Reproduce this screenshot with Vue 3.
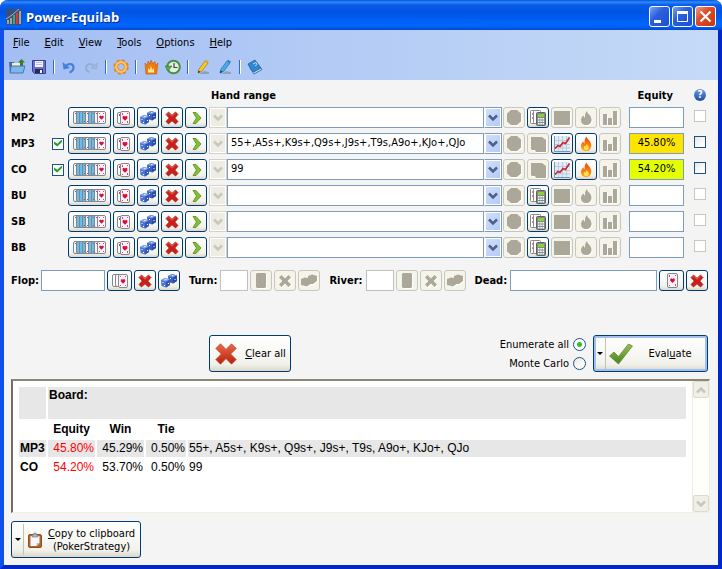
<template>
  <div class="window">
    <!-- Icon shapes, shared by all the buttons -->
    <svg class="sprite" aria-hidden="true">
      <defs>
        <linearGradient id="gRed" x1="0" y1="0" x2="0" y2="1">
          <stop offset="0" stop-color="#e8694f" /><stop offset="1" stop-color="#bd1f06" />
        </linearGradient>
        <linearGradient id="gGreen" x1="0" y1="0" x2="0" y2="1">
          <stop offset="0" stop-color="#9ac256" /><stop offset="1" stop-color="#4c8020" />
        </linearGradient>
        <linearGradient id="gFire" x1="0" y1="0" x2="0" y2="1">
          <stop offset="0" stop-color="#f0460a" /><stop offset="1" stop-color="#ffa616" />
        </linearGradient>
      </defs>
      <symbol id="heartCard" viewBox="0 0 9 13">
        <rect x=".5" y=".5" width="8" height="12" rx="1.5" fill="#fbf6fb" stroke="#85858f" />
        <path d="M4.5 8.8 2.3 6.6V5.2l1-.7 1.2.8 1.2-.8 1 .7v1.4z" fill="#d6103c" />
        <path d="M2 2h1v1H2zM6 2h1v1H6zM2 10h1v1H2zM6 10h1v1H6z" fill="#e04468" />
      </symbol>
      <symbol id="range" viewBox="0 0 33 13">
        <g stroke="#7b8792">
          <rect x=".5" y=".5" width="6" height="12" rx="1.5" fill="#f6f6f6" />
          <rect x="3.5" y=".5" width="6" height="12" rx="1.5" fill="#6cbce8" />
          <rect x="6.5" y=".5" width="6" height="12" rx="1.5" fill="#6cbce8" />
          <rect x="9.5" y=".5" width="6" height="12" rx="1.5" fill="#6cbce8" />
          <rect x="12.5" y=".5" width="6" height="12" rx="1.5" fill="#eef2f4" />
          <rect x="15.5" y=".5" width="6" height="12" rx="1.5" fill="#6cbce8" />
          <rect x="18.5" y=".5" width="6" height="12" rx="1.5" fill="#6cbce8" />
          <rect x="21.5" y=".5" width="6" height="12" rx="1.5" fill="#f6f6f6" />
        </g>
        <path d="M2 2h1v1H2zM11 2h1v1h-1zM14 2h1v1h-1zM20 2h1v1h-1zM23 2h1v1h-1zM11 10h1v1h-1zM14 10h1v1h-1zM20 10h1v1h-1z" fill="#c04468" />
        <use href="#heartCard" x="24" y="0" width="9" height="13" />
      </symbol>
      <symbol id="cards" viewBox="0 0 16 16">
        <rect x="1.5" y="2.5" width="7" height="11" rx="1.5" fill="#fff" stroke="#85858f" />
        <path d="M3 4h1v2H3z" fill="#d6305c" />
        <rect x="4.5" y="1.5" width="9" height="13" rx="1.5" fill="#fbf3f8" stroke="#85858f" />
        <path d="M9 10.8 6.6 8.4V6.6l1.2-.8L9 6.6l1.2-.8 1.2.8v1.8z" fill="#d6103c" />
        <path d="M6 3h1v2H6zM11 3h1v1h-1zM6 12h1v1H6zM11 11h1v2h-1z" fill="#e04468" />
      </symbol>
      <symbol id="flop" viewBox="0 0 16 16">
        <g fill="#fff" stroke="#85858f">
          <rect x=".5" y="1.5" width="7" height="12" rx="1.5" />
          <rect x="3.5" y="1.5" width="7" height="12" rx="1.5" />
          <rect x="6.5" y="1.5" width="9" height="13" rx="1.5" fill="#fbf3f8" />
        </g>
        <path d="M11 10.8 8.8 8.4V6.8l1.1-.8 1.1.8 1.1-.8 1.1.8v1.6z" fill="#d6103c" />
        <path d="M8 3h1v1H8zM13 3h1v1h-1zM8 12h1v1H8zM13 12h1v1h-1z" fill="#e04468" />
      </symbol>
      <symbol id="card" viewBox="0 0 16 16">
        <rect x="3.5" y=".5" width="10" height="14" rx="1.5" fill="#fbf3f8" stroke="#85858f" />
        <path d="M8.5 10 6.2 7.8V6.1l1.1-.8 1.2.8 1.2-.8 1.1.8v1.7z" fill="#d6103c" />
        <path d="M5 2h1v2H5zM11 2h1v1h-1zM5 12h1v1H5zM11 11h1v2h-1z" fill="#e04468" />
      </symbol>
      <symbol id="dice" viewBox="0 0 16 16">
        <path d="m7 3 4-2 5 1.5V8l-4 2.500L7.500 9z" fill="#3a62bd" />
        <path d="m7 3 4-2 5 1.500-4 2z" fill="#7398e6" />
        <path d="m12 4.500 4-2V8l-4 2.500z" fill="#2a4ea6" />
        <path d="m0 7 4-2 5 1.500v5.500l-4 2.500L.5 13z" fill="#4a74d0" />
        <path d="m0 7 4-2 5 1.500-4 2z" fill="#86a9f0" />
        <path d="m5 8.500 4-2V12l-4 2.500z" fill="#3359b4" />
        <path d="M1.500 9h1v1h-1zM3 12h1v1H3zM7 10h1v1H7zM13.500 6h1v1h-1zM9 5h1v1H9zM4 6.300h1.500v.8H4zM11 2.300h1.500v.8H11z" fill="#fff" />
      </symbol>
      <symbol id="cross" viewBox="0 0 16 16">
        <path d="M2 4.500 4.500 2 8 5.200 11.500 2 14 4.500 10.800 8 14 11.500 11.500 14 8 10.800 4.500 14 2 11.500 5.200 8z" fill="#cc1f1b" stroke="#9c1210" stroke-width=".7" />
        <path d="m3 4.400 1.500-1.500L8 6.200l3.500-3.300" fill="none" stroke="#f07468" stroke-width=".8" />
      </symbol>
      <symbol id="arrow" viewBox="0 0 16 16">
        <path d="M5 2.500h3L13 8l-5 5.500H5L8.500 8z" fill="#83bf35" stroke="#548c18" stroke-width=".8" />
      </symbol>
      <symbol id="calc" viewBox="0 0 16 16">
        <rect x=".5" y=".5" width="6" height="13" rx="1" fill="#fff" stroke="#888" />
        <path d="M2 3h1v2H2zM2 7h1v2H2z" fill="#e08090" />
        <rect x="3.500" y=".5" width="7" height="13" rx="1" fill="#fff" stroke="#888" />
        <rect x="6.500" y="2.500" width="9" height="13" rx="1" fill="#83898b" stroke="#5d6466" />
        <path d="M8 4h6v3H8z" fill="#8ed030" />
        <path d="M8 8h1.500v1.500H8zM10.200 8h1.600v1.500h-1.600zM12.500 8H14v1.500h-1.500zM8 10.500h1.500V12H8zM10.200 10.500h1.600V12h-1.600zM12.500 10.500H14V12h-1.500zM8 13h1.500v1.400H8zM10.200 13h1.600v1.400h-1.600zM12.500 13H14v1.400h-1.500z" fill="#fff" />
      </symbol>
      <symbol id="chart" viewBox="0 0 16 16">
        <path d="M0 0h16v15H0z" fill="#e2ecf7" />
        <path d="M0 4.500h16M0 8.500h16M0 12h16M4.500 0v15M8.500 0v15M12.500 0v15" stroke="#b9cce2" fill="none" />
        <path d="M.5 0v15.500H16" stroke="#7d93ae" fill="none" />
        <path d="m1 12.500 3-3 2 1 3-4 2.500 1 4-6" fill="none" stroke="#c8282c" stroke-width="1.700" />
      </symbol>
      <symbol id="flame" viewBox="0 0 16 16">
        <path d="M8.500.5c.3 2.500 4.800 4.500 4.800 9 0 3.500-2.300 5.500-5 5.500-3.200 0-5.300-2-5.300-5 0-2 1-3.500 2.500-4.500 0 1 .3 1.700 1 2C6.500 4.500 7 2 8.500.5z" fill="url(#gFire)" />
        <path d="M8.500 8c1.500 1.500 2.300 2.300 2.300 3.800 0 1.300-1 2.400-2.400 2.400-1.600 0-2.700-1-2.700-2.400 0-1 .5-1.700 1.200-2 .5.300.8.500 1 .7z" fill="#ffe14a" />
      </symbol>
      <!-- Flat versions for disabled buttons -->
      <symbol id="offDisc" viewBox="0 0 16 16"><path d="M5 0h6l4 3.500v8L11 15H5l-4-3.500v-8z" fill="#aca899" /></symbol>
      <symbol id="offCalc" viewBox="0 0 16 16"><path d="M1 1h11l4 3v12H6l-1-2H2l-1-1z" fill="#aca899" /></symbol>
      <symbol id="offChart" viewBox="0 0 16 16"><path d="M0 1h16v14H0z" fill="#aca899" /></symbol>
      <symbol id="offFlame" viewBox="0 0 16 16">
        <path d="M9 1c0 3 4.500 4 4.500 8.500 0 3.500-2 5.500-5.200 5.500C5 15 3 13 3 10c0-2 1-3.500 3-4.500V7l1 .5C7 5 7 3 9 1z" fill="#aca899" />
      </symbol>
      <symbol id="offBars" viewBox="0 0 16 16"><path d="M1 4h4v11H1zM6 8h4v7H6zM11 1h4v14h-4z" fill="#aca899" /></symbol>
      <symbol id="offCard" viewBox="0 0 16 16"><path d="M4 0h8l1 1v13l-1 1H4l-1-1V1z" fill="#aca899" /></symbol>
      <symbol id="offCross" viewBox="0 0 16 16">
        <path d="M2 4.500 4.500 2 8 5.500 11.500 2 14 4.500 10.500 8l3.500 3.500-2.500 2.500L8 10.500 4.500 14 2 11.500 5.500 8z" fill="#aca899" />
      </symbol>
      <symbol id="offDice" viewBox="0 0 16 16"><path d="m0 6 4-1.500 3 .5V3l4-1.500L16 3v5l-4 3H9.500L6 13.500 0 12z" fill="#aca899" /></symbol>
      <!-- Toolbar -->
      <symbol id="open" viewBox="0 0 16 16">
        <path d="M0 3h5l1 2h8v9H1z" fill="#3b6fa5" />
        <path d="M3 4h8v7H3z" fill="#f3ecc8" />
        <path d="M2 7h14l-2 7H1z" fill="#7fb6e6" stroke="#2f68a4" stroke-width=".8" />
        <path d="M12.500 0 16 3.500h-2V6h-3V3.500H9z" fill="#3d7a22" />
      </symbol>
      <symbol id="save" viewBox="0 0 16 16">
        <path d="M1.500 1.500h13v13h-11l-2-2z" fill="#6a70cc" stroke="#3a3f98" />
        <path d="M4 2h8v6H4z" fill="#f2f4ff" />
        <path d="M5 3.500h6M5 5.500h6" stroke="#b8bfe4" fill="none" />
        <path d="M4 10h8v4H4z" fill="#262b5f" /><path d="M9 11h2v3H9z" fill="#fff" />
      </symbol>
      <symbol id="undo" viewBox="0 0 16 16">
        <path d="m1.500 3 1 7.500L9 9z" fill="#4580dc" />
        <path d="M5 7c3-3.500 7.500-2 7.500 1.500 0 2.500-1.500 4-4 5" fill="none" stroke="#4580dc" stroke-width="2.200" />
      </symbol>
      <symbol id="redo" viewBox="0 0 16 16">
        <path d="m14.500 4-1 6L8 9z" fill="#a3b9dc" stroke="#8aa6d2" stroke-width=".6" />
        <path d="M11.500 7C8 3.500 3 5 3 9c0 2 1.500 3.500 3.500 4" fill="none" stroke="#92abd4" stroke-width="1.700" />
      </symbol>
      <symbol id="gear" viewBox="0 0 16 16">
        <circle cx="8" cy="8" r="6.500" fill="none" stroke="#e08a28" stroke-width="2.500" stroke-dasharray="3 2.100" />
        <circle cx="8" cy="8" r="4.700" fill="none" stroke="#dc8420" stroke-width="3.500" />
        <circle cx="8" cy="8" r="4.800" fill="none" stroke="#ffc671" stroke-width="2.200" />
      </symbol>
      <symbol id="fire" viewBox="0 0 16 16">
        <path d="M3 15 2 4l2.500 2.500L5 2l2 3 1-4 2 4 2-2.500.500 4L15 4l-1.500 11z" fill="#ef7d0e" stroke="#c2560a" stroke-width=".6" />
        <path d="M5 13.500V9l1.500 2L8 7l1.500 4L11 9v4.500z" fill="#ffe58c" />
      </symbol>
      <symbol id="clock" viewBox="0 0 16 16">
        <circle cx="8.500" cy="8" r="6.300" fill="#e4efe0" stroke="#4a8f48" stroke-width="2" />
        <path d="M9 4v4.500h3.500" fill="none" stroke="#444" stroke-width="1.200" />
        <path d="M0 7h7l-4 5z" fill="#59ac4a" stroke="#2d742b" stroke-width=".6" />
      </symbol>
      <symbol id="pencil" viewBox="0 0 16 16">
        <path d="M4 15h10v-2l-5-1z" fill="#8fa0b8" />
        <path d="m3 14 1-4 6-8 3 2-6 8z" fill="#f5c928" stroke="#a47c14" stroke-width=".7" />
        <path d="m10 2 1-1.300 3 2L13 4z" fill="#d8a838" /><path d="m3 14 .6-2.500L5.500 13z" fill="#3b2a14" />
      </symbol>
      <symbol id="pencilBlue" viewBox="0 0 16 16">
        <path d="M4 15h10v-2l-5-1z" fill="#8fa0b8" />
        <path d="m3 14 1-4 6-8 3 2-6 8z" fill="#4fa8e4" stroke="#1d6fb0" stroke-width=".7" />
        <path d="m10 2 1-1.300 3 2L13 4z" fill="#2c7cc4" /><path d="m3 14 .6-2.500L5.500 13z" fill="#182c48" />
      </symbol>
      <symbol id="book" viewBox="0 0 16 16">
        <path d="m5 12 8-4 2 2.500L7 15z" fill="#d4e4f4" stroke="#205a98" stroke-width=".8" />
        <path d="m1 5 7-4 6 8-7 4-3-2z" fill="#2f86d2" stroke="#175a9c" stroke-width=".7" />
        <path d="m6 5 3-1.500 1 2L8 7" fill="none" stroke="#b8dcf8" />
      </symbol>
      <symbol id="logo" viewBox="0 0 16 16">
        <path d="M0 0h16v16H0z" fill="#3a5078" />
        <path d="M1 11h2v4H1zM4 9h2v6H4z" fill="#9aa4b4" /><path d="M7 6h2v9H7z" fill="#4da364" />
        <path d="M10 4h2v11h-2z" fill="#d43c34" /><path d="M13 2h2v13h-2z" fill="#9aa6ba" />
        <path d="M0 10 6 6l7-6" fill="none" stroke="#a6b2c6" />
      </symbol>
      <symbol id="clipboard" viewBox="0 0 16 16">
        <rect x="1.500" y="2.500" width="13" height="13" rx="1.500" fill="#b5662c" stroke="#8d4d20" />
        <path d="M3.500 4h9v7l-3 3h-6z" fill="#f8f8fb" /><path d="M12.500 11h-3v3z" fill="#b9bfca" />
        <path d="M5 3h1.500L7 1h2l.5 2H11v2H5z" fill="#b0b3ba" stroke="#73767c" stroke-width=".6" />
      </symbol>
      <symbol id="bigCross" viewBox="-1 -1 26 26">
        <path d="M1 6 6 1l6 6 6-6 5 5-6 6 6 6-5 5-6-6-6 6-5-5 6-6z" fill="url(#gRed)" stroke="#b93a20" stroke-width=".8" />
      </symbol>
      <symbol id="bigCheck" viewBox="0 0 24 24">
        <path d="m.5 14 4.500-4 4.500 4.500L19.500 2l4 2L9.500 22z" fill="url(#gGreen)" stroke="#5f8e34" stroke-width=".8" />
      </symbol>
      <symbol id="chevron" viewBox="0 0 10 8"><path d="m1 1.500 4 4 4-4" fill="none" stroke="currentColor" stroke-width="2.500" /></symbol>
      <symbol id="chevronUp" viewBox="0 0 10 8"><path d="m1 6.500 4-4 4 4" fill="none" stroke="currentColor" stroke-width="2.500" /></symbol>
    </svg>

    <header class="titlebar">
      <svg class="icon"><use href="#logo" /></svg>
      <h1 class="title">Power-Equilab</h1>
      <button class="caption-button" aria-label="Minimize">
        <svg viewBox="0 0 19 19"><path d="M4 13h7v3H4z" fill="#fff" /></svg>
      </button>
      <button class="caption-button" aria-label="Maximize">
        <svg viewBox="0 0 19 19"><path d="M4.500 4.500h10v10h-10z" fill="none" stroke="#fff" /><path d="M4 4h11v3H4z" fill="#fff" /></svg>
      </button>
      <button class="caption-button close" aria-label="Close">
        <svg viewBox="0 0 19 19"><path d="m4.500 4.500 10 10M14.500 4.500l-10 10" fill="none" stroke="#fff" stroke-width="2.200" /></svg>
      </button>
    </header>

    <div class="bars">
      <nav class="menu">
        <button v-for="item in menu" :key="item" class="menu-item">
          <u>{{ item[0] }}</u>{{ item.slice(1) }}
        </button>
      </nav>
      <div class="toolbar">
        <template v-for="(group, g) in tools" :key="g">
          <span v-if="g > 0" class="separator"></span>
          <button v-for="tool in group" :key="tool" class="tool" :aria-label="tool">
            <svg class="icon"><use :href="'#' + tool" /></svg>
          </button>
        </template>
      </div>
    </div>

    <main class="panel">
      <div class="row head">
        <span class="head-range">Hand range</span>
        <span class="head-equity">Equity</span>
        <button class="help" aria-label="Help">?</button>
      </div>

      <div v-for="p in players" :key="p.name" class="row">
        <label class="name" :for="'range-' + p.name">{{ p.name }}</label>
        <span class="active-slot">
          <input v-if="p.seated" v-model="p.active" type="checkbox" class="check" :aria-label="p.name + ' active'" />
        </span>
        <button class="btn wide" aria-label="Select range"><svg class="range-icon"><use href="#range" /></svg></button>
        <button v-for="i in ['cards', 'dice', 'cross', 'arrow']" :key="i" class="btn" :aria-label="i">
          <svg class="icon"><use :href="'#' + i" /></svg>
        </button>
        <div class="combo">
          <button class="drop" disabled aria-label="History"><svg class="chevron"><use href="#chevron" /></svg></button>
          <input :id="'range-' + p.name" v-model="p.range" type="text" class="field grow" />
          <button class="drop blue" aria-label="Saved ranges"><svg class="chevron"><use href="#chevron" /></svg></button>
        </div>
        <button v-for="b in actions(p)" :key="b.icon" class="btn" :disabled="b.off" :aria-label="b.icon">
          <svg class="icon"><use :href="'#' + b.icon" /></svg>
        </button>
        <input
          type="text"
          readonly
          class="field equity"
          :class="p.tone"
          :value="p.equity"
          :aria-label="p.name + ' equity'"
        />
        <input type="checkbox" class="check lock" :disabled="!p.seated" :aria-label="'Lock ' + p.name" />
      </div>

      <div class="board">
        <label for="flop-cards">Flop:</label>
        <input id="flop-cards" type="text" class="field flop-field" />
        <button class="btn mid" aria-label="Pick flop"><svg class="icon"><use href="#flop" /></svg></button>
        <button class="btn" aria-label="Clear flop"><svg class="icon"><use href="#cross" /></svg></button>
        <button class="btn" aria-label="Random flop"><svg class="icon"><use href="#dice" /></svg></button>
        <template v-for="street in ['Turn', 'River']" :key="street">
          <label class="street" :for="street">{{ street }}:</label>
          <input :id="street" type="text" disabled class="field street-field" />
          <button v-for="i in ['offCard', 'offCross', 'offDice']" :key="i" class="btn" disabled :aria-label="i">
            <svg class="icon"><use :href="'#' + i" /></svg>
          </button>
        </template>
        <label class="street" for="dead-cards">Dead:</label>
        <input id="dead-cards" type="text" class="field grow" />
        <button class="btn mid" aria-label="Pick dead cards"><svg class="icon"><use href="#card" /></svg></button>
        <button class="btn" aria-label="Clear dead cards"><svg class="icon"><use href="#cross" /></svg></button>
      </div>

      <div class="run">
        <button class="btn big clear">
          <svg class="big-icon"><use href="#bigCross" /></svg>
          <span><u>C</u>lear all</span>
        </button>
        <div class="modes">
          <label>Enumerate all <input v-model="mode" type="radio" value="all" class="radio" /></label>
          <label>Monte Carlo <input v-model="mode" type="radio" value="monte" class="radio" /></label>
        </div>
        <button class="btn big evaluate">
          <span class="split"></span>
          <svg class="big-icon"><use href="#bigCheck" /></svg>
          <span class="caption">Eval<u>u</u>ate</span>
        </button>
      </div>

      <section class="output">
        <div class="output-body">
          <table class="results">
            <colgroup>
              <col class="c-name" /><col class="c-num" /><col class="c-num" /><col class="c-tie" /><col />
            </colgroup>
            <tbody>
              <tr class="shade board-row">
                <td></td>
                <th colspan="4">Board:</th>
              </tr>
              <tr>
                <td></td>
                <th class="center">Equity</th>
                <th class="center">Win</th>
                <th class="center">Tie</th>
                <td></td>
              </tr>
              <tr v-for="(r, i) in results" :key="r.name" :class="{ shade: i % 2 === 0 }">
                <th>{{ r.name }}</th>
                <td class="num red">{{ r.equity }}</td>
                <td class="num">{{ r.win }}</td>
                <td class="num">{{ r.tie }}</td>
                <td>{{ r.range }}</td>
              </tr>
            </tbody>
          </table>
        </div>
        <div class="scrollbar">
          <button class="scroll-button" disabled aria-label="Scroll up"><svg class="chevron"><use href="#chevronUp" /></svg></button>
          <button class="scroll-button" disabled aria-label="Scroll down"><svg class="chevron"><use href="#chevron" /></svg></button>
        </div>
      </section>

      <button class="btn big copy">
        <span class="split"></span>
        <svg class="icon"><use href="#clipboard" /></svg>
        <span class="caption"><u>C</u>opy to clipboard<br />(PokerStrategy)</span>
      </button>
    </main>
  </div>
</template>

<script setup>
import { ref } from "vue";

const menu = ["File", "Edit", "View", "Tools", "Options", "Help"];

const tools = [
  ["open", "save"],
  ["undo", "redo"],
  ["gear"],
  ["fire", "clock"],
  ["pencil", "pencilBlue"],
  ["book"],
];

const players = ref([
  { name: "MP2", range: "", equity: "" },
  {
    name: "MP3",
    seated: true,
    active: true,
    range: "55+,A5s+,K9s+,Q9s+,J9s+,T9s,A9o+,KJo+,QJo",
    equity: "45.80%",
    tone: "amber",
  },
  { name: "CO", seated: true, active: true, range: "99", equity: "54.20%", tone: "lime" },
  { name: "BU", range: "", equity: "" },
  { name: "SB", range: "", equity: "" },
  { name: "BB", range: "", equity: "" },
]);

const results = [
  {
    name: "MP3",
    equity: "45.80%",
    win: "45.29%",
    tie: "0.50%",
    range: "55+, A5s+, K9s+, Q9s+, J9s+, T9s, A9o+, KJo+, QJo",
  },
  { name: "CO", equity: "54.20%", win: "53.70%", tie: "0.50%", range: "99" },
];

const mode = ref("all");

const actions = (p) => {
  const on = Boolean(p.seated);
  return [
    { icon: "offDisc", off: true },
    { icon: on ? "offCalc" : "calc", off: on },
    { icon: on ? "chart" : "offChart", off: !on },
    { icon: on ? "flame" : "offFlame", off: !on },
    { icon: "offBars", off: true },
  ];
};
</script>

<style>
body {
  margin: 0;
  background: #fff;
}
</style>

<style scoped>
.window {
  display: flex;
  flex-direction: column;
  box-sizing: border-box;
  min-height: 100vh;
  border: 4px solid #0a3fe0;
  border-top: 0;
  border-left-color: #0f50ea;
  border-right-color: #0028c8;
  border-bottom-color: #0028c8;
  border-radius: 8px 8px 0 0;
  background: #f4f4f4;
  font-family: "DejaVu Sans Condensed", "DejaVu Sans", sans-serif;
  font-size: 11px;
  line-height: 13px;
  color: #000;
}

.sprite {
  position: absolute;
  width: 0;
  height: 0;
}

button,
input {
  box-sizing: border-box;
  margin: 0;
  padding: 0;
  border: 0;
  border-radius: 0;
  background: none;
  font: inherit;
  color: inherit;
}

svg {
  display: block;
  flex: none;
}

.icon {
  width: 16px;
  height: 16px;
}

/* Title bar */
.titlebar {
  display: flex;
  align-items: center;
  gap: 2px;
  box-sizing: border-box;
  height: 30px;
  margin: 0 -4px;
  padding: 3px 6px 0;
  border-radius: 8px 8px 0 0;
  background: linear-gradient(#0a50d8 0, #2a8cff 2px, #0a5ce8 5px, #0054e3 12px, #0062fa 22px, #0066ff 26px, #0048d0 30px);
}

.title {
  flex: 1;
  margin: 0 2px;
  font-family: "Open Sans", "Noto Sans", sans-serif;
  font-size: 13px;
  font-weight: 700;
  line-height: 18px;
  color: #fff;
  text-shadow: 1px 1px 0 #0a2a88;
}

.caption-button {
  width: 21px;
  height: 21px;
  border: 1px solid #fff;
  border-radius: 3px;
  background: linear-gradient(135deg, #7ba2f4, #2a5fe0 40%, #1c4fd0);
}

.caption-button.close {
  background: linear-gradient(135deg, #f09a80, #dd4d26 40%, #c8380f);
}

/* Menu and toolbar */
.bars {
  height: 50px;
  background: linear-gradient(90deg, #a4bef3, #c5daf7);
}

.menu {
  display: flex;
  gap: 15px;
  padding: 6px 9px 5px;
}

.menu-item {
  line-height: 13px;
}

.toolbar {
  display: flex;
  align-items: center;
  gap: 6px;
  padding: 5px;
}

.tool {
  height: 16px;
}

.separator {
  width: 1px;
  height: 14px;
  border-right: 1px solid #fff;
  background: #2c6cd0;
}

/* Player rows */
.panel {
  display: flex;
  flex: 1;
  flex-direction: column;
  padding: 8px 8px 7px 7px;
}

.row,
.board {
  display: flex;
  align-items: center;
  gap: 2px;
  margin-bottom: 5px;
}

.row {
  padding-right: 4px;
}

.head {
  height: 14px;
  font-weight: 700;
}

.head-range {
  flex: 1;
  padding-left: 200px;
}

.head-equity {
  margin-right: 19px;
}

.help {
  width: 12px;
  height: 12px;
  border-radius: 50%;
  background: linear-gradient(#6f9de0, #1c4aa8);
  color: #fff;
  font-size: 10px;
  font-weight: 700;
  line-height: 12px;
}

.name {
  width: 39px;
  font-weight: 700;
}

.active-slot {
  width: 14px;
}

.btn {
  display: flex;
  flex: none;
  align-items: center;
  justify-content: center;
  width: 22px;
  height: 21px;
  border: 1px solid #003c74;
  border-radius: 3px;
  background: linear-gradient(#fff, #f2f2ec 80%, #dcd6c8);
}

.btn:disabled {
  border-color: #c9c7ba;
  background: #f5f4ea;
}

.btn:disabled .icon {
  filter: drop-shadow(1px 1px 0 #fff);
}

.wide {
  width: 43px;
}

.mid {
  width: 25px;
}

.range-icon {
  width: 33px;
  height: 13px;
}

.combo {
  display: flex;
  flex: 1;
  min-width: 0;
  margin-right: -1px;
}

.drop {
  display: flex;
  flex: none;
  align-items: center;
  justify-content: center;
  width: 18px;
  height: 21px;
  border: 1px solid #d4d2c6;
  background: #eeede5;
  box-shadow: inset 0 0 0 1px #fff;
  color: #c9c7ba;
}

.drop.blue {
  border-color: #7f9db9;
  border-left-color: #fff;
  background: linear-gradient(135deg, #d2e0fc, #b4c8f8);
  color: #4d6185;
}

.chevron {
  width: 10px;
  height: 8px;
}

.field {
  width: 0;
  height: 21px;
  padding: 0 3px 2px;
  border: 1px solid #7f9db9;
  background: #fff;
}

.field:disabled {
  border-color: #c0c0c0;
}

.grow {
  flex: 1;
}

.equity {
  width: 55px;
  margin-left: 6px;
  text-align: center;
}

.equity.amber {
  background: #ffe400;
}

.equity.lime {
  background: #e4ff00;
}

.check {
  display: block;
  appearance: none;
  width: 12px;
  height: 12px;
  border: 1px solid #1c5180;
  background: linear-gradient(135deg, #e6e6e2, #fff 80%);
}

.check:disabled {
  border-color: #cac8bb;
  background: #fff;
}

.check:checked {
  background: #fff;
}

.check:checked::after {
  content: "";
  display: block;
  width: 8px;
  height: 7px;
  margin: 1px;
  background: #21a121;
  clip-path: polygon(0 30%, 40% 60%, 100% 0, 100% 35%, 40% 100%, 0 65%);
}

.lock {
  margin: 0 0 3px 8px;
}

/* Board cards */
.board {
  margin-top: 7px;
  margin-bottom: 44px;
  padding-right: 2px;
}

.board label {
  font-weight: 700;
}

.board .street {
  margin: 0 1px 0 7px;
}

.flop-field {
  width: 64px;
}

.street-field {
  width: 28px;
}

/* Run controls */
.run {
  display: flex;
  align-items: center;
  margin-bottom: 7px;
  padding-right: 2px;
}

.big {
  height: 37px;
}

.big-icon {
  width: 24px;
  height: 24px;
}

.clear {
  gap: 7px;
  width: 82px;
  margin-left: 198px;
}

.modes {
  display: flex;
  flex: 1;
  flex-direction: column;
  align-items: flex-end;
  gap: 6px;
  margin-right: 7px;
}

.modes label {
  display: flex;
  align-items: center;
  gap: 4px;
}

.radio {
  appearance: none;
  width: 13px;
  height: 13px;
  border: 1px solid #1c5180;
  border-radius: 50%;
  background: linear-gradient(135deg, #e6e6e2, #fff 80%);
}

.radio:checked {
  background: radial-gradient(circle, #2fbf2f 2px, #fff 3px);
}

.evaluate {
  width: 115px;
  box-shadow: inset 0 0 0 2px #a2bff0;
}

.evaluate,
.copy {
  justify-content: flex-start;
}

.evaluate .caption {
  flex: 1;
}

.split {
  display: flex;
  align-items: center;
  justify-content: center;
  align-self: stretch;
  width: 11px;
  margin: 2px 3px 2px 0;
  border-right: 1px solid #c5c1ae;
}

.split::before {
  content: "";
  border: 3px solid transparent;
  border-top-color: #000;
  border-bottom: 0;
}

/* Results */
.output {
  display: flex;
  flex: 1;
  box-sizing: border-box;
  min-height: 134px;
  margin-bottom: 8px;
  border: 2px solid #716f64;
  border-top-color: #8b887a;
  border-right: 1px solid #f1efe2;
  border-bottom: 1px solid #f1efe2;
  background: #fff;
}

.output-body {
  flex: 1;
  padding: 4px;
  font-family: "Liberation Sans", Arial, sans-serif;
  font-size: 12px;
  line-height: 17px;
}

.results {
  width: 100%;
  table-layout: fixed;
  border-spacing: 2px;
}

.c-name {
  width: 27px;
}

.c-num {
  width: 47px;
}

.c-tie {
  width: 40px;
}

.results th,
.results td {
  height: 17px;
  padding: 0 1px;
  text-align: left;
  white-space: nowrap;
}

.results .board-row th {
  height: 32px;
  vertical-align: top;
}

.shade > * {
  background: #e7e7e7;
}

.results .center {
  text-align: center;
}

.results .num {
  text-align: right;
}

.red {
  color: #f00;
}

.scrollbar {
  display: flex;
  flex-direction: column;
  justify-content: space-between;
  width: 16px;
  border-left: 1px solid #eeede5;
  background: #fefefb;
}

.scroll-button {
  display: flex;
  align-items: center;
  justify-content: center;
  height: 17px;
  border: 1px solid #dddccb;
  border-radius: 2px;
  background: #f0efe8;
  color: #c9c7bf;
}

.copy {
  width: 130px;
}

.copy .caption {
  flex: 1;
}
</style>
